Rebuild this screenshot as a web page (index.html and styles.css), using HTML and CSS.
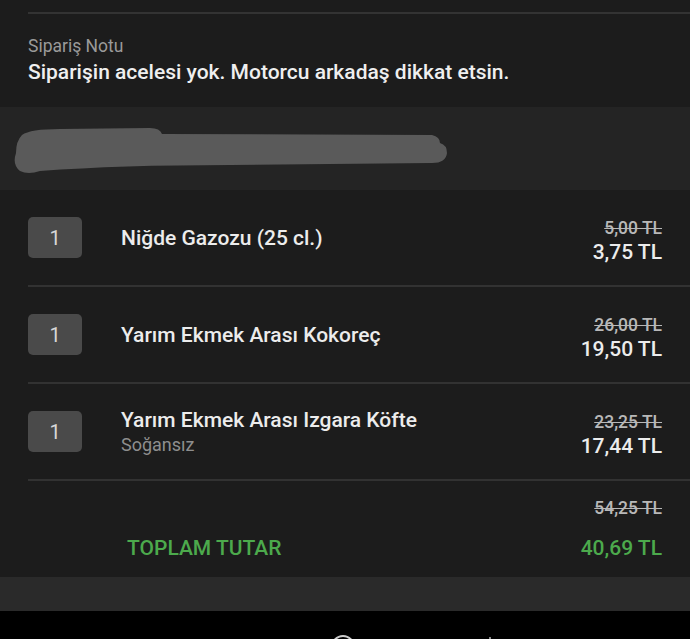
FILE: index.html
```html
<!DOCTYPE html>
<html lang="tr">

<head>
    <meta charset="UTF-8">
    <meta name="viewport" content="width=device-width, initial-scale=1.0">
    <title>Sipariş Detayı</title>
    <link rel="stylesheet" href="styles.css">
</head>

<body>
    <div class="top-rule"></div>

    <div class="note">
        <p class="note-label">Sipariş Notu</p>
        <p class="note-text">Siparişin acelesi yok. Motorcu arkadaş dikkat etsin.</p>
    </div>

    <div class="address">
        <svg width="450" height="52" viewBox="0 0 450 52">
            <path d="M22 12 Q30 6 60 6 L150 5 Q160 5 162 11 L432 12 Q440 14 440 20 Q447 22 447 30 Q446 40 432 40 L230 42 Q120 42 40 48 Q28 52 20 48 Q12 42 16 30 Q16 18 22 12 Z" fill="#5a5a5a" />
        </svg>
    </div>

    <div class="items">
        <div class="item">
            <span class="qty">1</span>
            <div class="info">
                <p class="name">Niğde Gazozu (25 cl.)</p>
            </div>
            <div class="price">
                <s>5,00 TL</s>
                <span>3,75 TL</span>
            </div>
        </div>
        <div class="item">
            <span class="qty">1</span>
            <div class="info">
                <p class="name">Yarım Ekmek Arası Kokoreç</p>
            </div>
            <div class="price">
                <s>26,00 TL</s>
                <span>19,50 TL</span>
            </div>
        </div>
        <div class="item">
            <span class="qty">1</span>
            <div class="info">
                <p class="name">Yarım Ekmek Arası Izgara Köfte</p>
                <p class="option">Soğansız</p>
            </div>
            <div class="price">
                <s>23,25 TL</s>
                <span>17,44 TL</span>
            </div>
        </div>
        <div class="total">
            <s class="total-old">54,25 TL</s>
            <div class="total-row">
                <span>TOPLAM TUTAR</span>
                <span>40,69 TL</span>
            </div>
        </div>
    </div>

    <div class="footer-band"></div>

    <div class="navbar">
        <span class="home"></span>
        <span class="back"></span>
    </div>
</body>

</html>
```

FILE: styles.css
```css
* {
    margin: 0;
    padding: 0;
    box-sizing: border-box;
}

body {
    width: 690px;
    height: 639px;
    overflow: hidden;
    background-color: #1c1c1c;
    font-family: Roboto, "Noto Sans", sans-serif;
    color: #ececec;
}

.top-rule {
    height: 14px;
    margin-left: 28px;
    border-bottom: 2px solid #333;
}

.note {
    height: 93px;
    padding: 22px 28px 0;
}

.note-label {
    font-size: 17.5px;
    color: #9a9a9a;
    line-height: 20px;
}

.note-text {
    font-size: 21px;
    font-weight: 500;
    line-height: 26px;
    margin-top: 3px;
    color: #efefef;
}

.address {
    height: 83px;
    background-color: #242424;
    padding-top: 16px;
}

.address svg {
    display: block;
}

.item {
    height: 97px;
    margin-left: 28px;
    padding-right: 28px;
    border-bottom: 2px solid #323232;
    display: flex;
    align-items: center;
}

.qty {
    width: 54px;
    height: 41px;
    border-radius: 5px;
    background-color: #4a4a4a;
    color: #d8d8d8;
    font-size: 20px;
    display: flex;
    align-items: center;
    justify-content: center;
}

.info {
    flex: 1;
    margin-left: 39px;
}

.name {
    font-size: 21px;
    font-weight: 500;
    line-height: 26px;
}

.option {
    font-size: 18px;
    color: #8e8e8e;
    line-height: 22px;
    margin-top: 1px;
}

.price {
    display: flex;
    flex-direction: column;
    align-items: flex-end;
    margin-top: 6px;
}

.price s,
.total-old {
    font-size: 17.5px;
    font-weight: 500;
    color: #b8b8b8;
    line-height: 22px;
}

.price span {
    font-size: 21px;
    font-weight: 500;
    line-height: 26px;
}

.total {
    height: 96px;
    padding: 16px 28px 0 28px;
    display: flex;
    flex-direction: column;
    align-items: flex-end;
}

.total-row {
    width: 100%;
    display: flex;
    justify-content: space-between;
    margin-top: 17px;
    padding-left: 99px;
    color: #4caa4c;
    font-size: 21px;
    font-weight: 500;
}

.footer-band {
    height: 34px;
    background-color: #2a2a2a;
}

.navbar {
    height: 29px;
    background-color: #000;
    position: relative;
}

.home {
    position: absolute;
    left: 331px;
    top: 24px;
    width: 24px;
    height: 24px;
    border: 2px solid #ccc;
    border-radius: 50%;
}

.back {
    position: absolute;
    left: 489px;
    top: 26px;
    width: 2px;
    height: 6px;
    background-color: #888;
}
```
